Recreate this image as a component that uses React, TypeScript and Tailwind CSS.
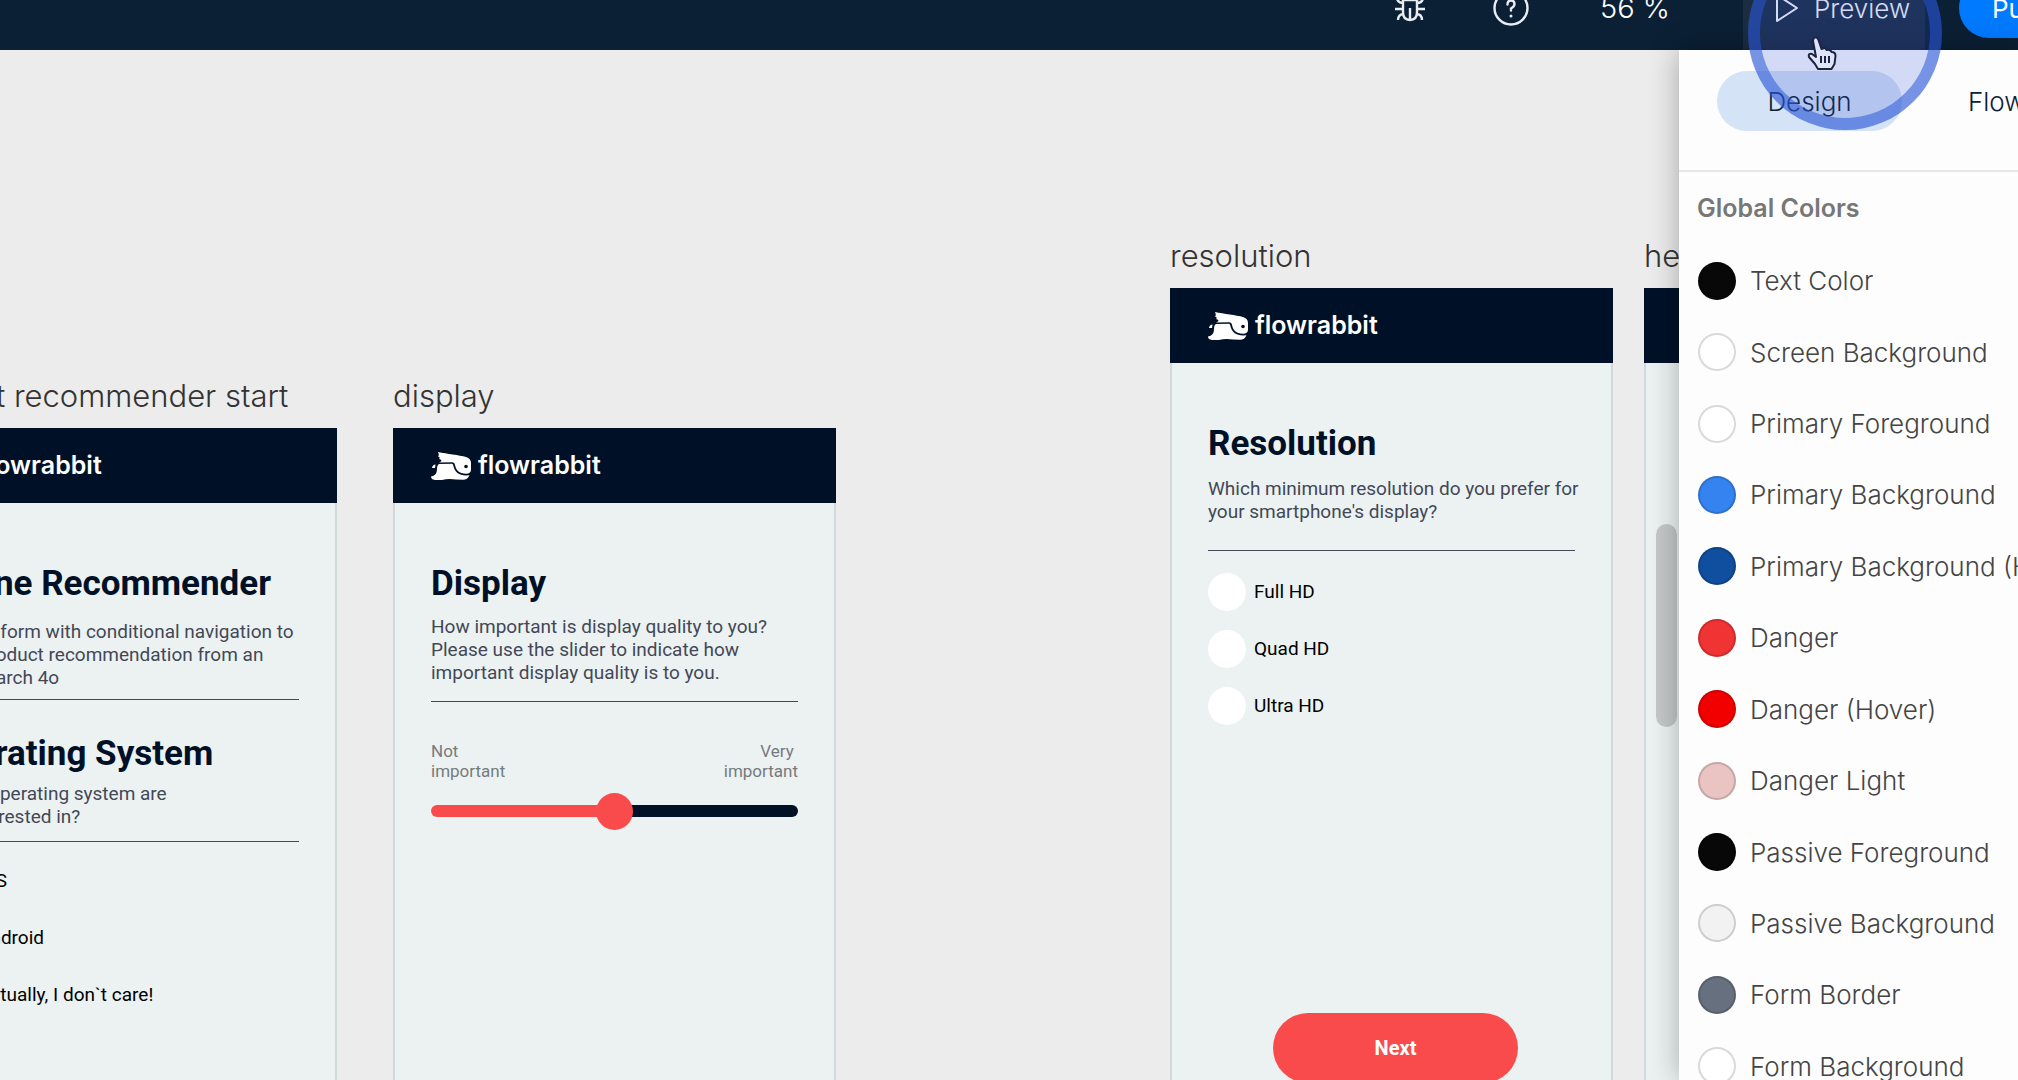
import type { ReactNode } from "react";

function Rabbit() {
  return (
    <svg viewBox="0 0 40 28" className="h-7 w-10 shrink-0" fill="#fff" aria-hidden="true">
      <path d="M7 0 C16 2 28 3 35 5 Q40 6.500 40 11 L40 18 Q39.500 22 35 21.800 C28 21.500 25 18 24 13 Q23.500 10.200 21 10.200 L8 10.500 Q12 8.800 9.500 7.500 L8 7 Q10 5.500 7 4.500 Q8.500 3 7 0Z" />
      <path d="M8 12 L21 11.800 Q22 11.800 22.300 13.500 C23.500 20 28 23.500 35 23.500 L38.500 23.300 Q36.500 27.800 32 27.800 L25 27.500 Q17 26.500 11 28 L4 28 Q0 27.500 0 24.500 Q6 24 6 17 Q6 13 8 12Z" />
      <path d="M1 16 Q1.500 12.500 4.500 12.500 L4 16Z" />
      <circle cx="35" cy="14.500" r="1.800" fill="#001127" />
    </svg>
  );
}

function Artboard({ name, place, children }: { name: string; place: string; children?: ReactNode }) {
  return (
    <section className={`absolute w-[443px] ${place}`}>
      <h2 className="mb-3 text-[31px] leading-10 font-light whitespace-nowrap text-[#333]">{name}</h2>
      <div className="h-[900px] border-x-2 border-[#d3d9da] bg-[#ecf2f2] font-[Roboto,sans-serif]">
        <div className="-mx-0.5 flex h-[75px] items-center gap-[7px] bg-[#001127] px-[38px] font-[Inter,sans-serif] text-[25px] font-semibold text-white">
          <Rabbit />
          flowrabbit
        </div>
        <div className="px-9 pt-[61px]">{children}</div>
      </div>
    </section>
  );
}

function Title({ children }: { children: ReactNode }) {
  return <h3 className="mb-2 text-[35px] leading-10 font-bold whitespace-nowrap text-[#001127]">{children}</h3>;
}

function Text({ children }: { children: ReactNode }) {
  return <p className="text-[19px] leading-[23px] whitespace-nowrap text-[#434857]">{children}</p>;
}

function Options({ group, items }: { group: string; items: string[] }) {
  return (
    <div className="flex flex-col gap-[19px]">
      {items.map((item) => (
        <label key={item} className="flex h-[38px] items-center gap-2 text-[19px] whitespace-nowrap text-black">
          <input type="radio" name={group} className="size-[38px] shrink-0 appearance-none rounded-full bg-white" />
          {item}
        </label>
      ))}
    </div>
  );
}

const colors = [
  ["Text Color", "bg-[#080808]"],
  ["Screen Background", "bg-white"],
  ["Primary Foreground", "bg-white"],
  ["Primary Background", "bg-[#3483f0]"],
  ["Primary Background (Hover)", "bg-[#104e9f]"],
  ["Danger", "bg-[#f03434]"],
  ["Danger (Hover)", "bg-[#f20000]"],
  ["Danger Light", "bg-[#eac3c3]"],
  ["Passive Foreground", "bg-[#080808]"],
  ["Passive Background", "bg-[#f2f2f2]"],
  ["Form Border", "bg-[#67707e]"],
  ["Form Background", "bg-white"],
];

function TopBar() {
  return (
    <header className="flex h-[50px] shrink-0 items-end justify-end overflow-hidden bg-[#0b2035] text-white">
      <div className="flex h-[84px] shrink-0 items-center font-light">
        <button aria-label="Debug" className="mr-[67px]">
          <svg viewBox="0 0 32 40" className="h-10 w-8" fill="none" stroke="#e8edf2" strokeWidth="2.400" aria-hidden="true">
            <path d="M9 12h14v12q0 8-7 8t-7-8zM16 20v12M9 21H1M23 21h8M9 15q-6 0-6-6M23 15q6 0 6-6M10 26q-6 0-6 6M22 26q6 0 6 6M11 12q0-7 5-7t5 7" />
          </svg>
        </button>
        <button aria-label="Help" className="mr-[71px]">
          <svg viewBox="0 0 36 36" className="size-9" fill="none" stroke="#e8edf2" strokeWidth="2.400" aria-hidden="true">
            <circle cx="18" cy="18" r="16.500" />
            <path d="M14.500 14.500q0-4 3.500-4t3.500 3.500q0 2.500-3.500 4.500v2" strokeLinecap="round" />
            <circle cx="18" cy="26" r="1.500" fill="#e8edf2" stroke="none" />
          </svg>
        </button>
        <span className="mr-[74px] w-[69px] text-[29px] whitespace-nowrap">56 %</span>
        <button className="flex h-full w-[182px] items-center gap-[15px] bg-[#1b2d40] pl-8 text-[26px]">
          <svg viewBox="0 0 24 30" className="h-[30px] w-6" fill="none" stroke="currentColor" strokeWidth="2" strokeLinejoin="round" aria-hidden="true">
            <path d="M2 2v26L22 15z" />
          </svg>
          Preview
        </button>
        <button className="ml-[34px] h-[60px] w-[59px] overflow-hidden rounded-l-full bg-[#007aff] pl-[33px] text-left text-[26px] font-normal">
          Publish
        </button>
      </div>
    </header>
  );
}

function Sidebar() {
  return (
    <aside className="z-10 w-[339px] shrink-0 overflow-hidden bg-[#fdfdfd] shadow-[0_0_28px_rgba(0,0,0,0.3)]">
      <div className="flex h-[122px] items-start gap-[66px] border-b-2 border-[#e4e6e7] px-[38px] pt-[21px] text-[26px] font-light text-[#0b2035]">
        <button className="h-[60px] w-[185px] shrink-0 rounded-full bg-[#d5e3f6]">Design</button>
        <button className="h-[60px] shrink-0">Flow</button>
      </div>
      <h2 className="px-[18px] pt-5 text-[25px] leading-8 font-semibold text-[#777]">Global Colors</h2>
      <ul className="mt-[21px] grid h-[857px] grid-rows-12">
        {colors.map(([name, fill]) => (
          <li key={name} className="flex items-center pl-[19px]">
            <button className="flex items-center gap-[14px] text-[26px] font-light whitespace-nowrap text-[#444]">
              <span className={`size-[38px] shrink-0 rounded-full border-2 border-black/15 ${fill}`} />
              {name}
            </button>
          </li>
        ))}
      </ul>
    </aside>
  );
}

export default function App() {
  return (
    <div className="relative flex h-screen flex-col overflow-hidden bg-[#ececec] font-[Inter,sans-serif]">
      <TopBar />
      <div className="flex min-h-0 flex-1">
        <main className="relative min-w-0 flex-1 overflow-hidden">
          <Artboard name="product recommender start" place="-left-[106px] top-[326px]">
            <Title>Phone Recommender</Title>
            <div className="pt-2">
              <Text>
                Sample form with conditional navigation to
                <br />
                get a product recommendation from an
                <br />
                AI Research 4o
              </Text>
            </div>
            <hr className="mt-[10px] mb-[34px] border-[#434857]" />
            <Title>Operating System</Title>
            <Text>
              Which operating system are
              <br />
              you interested in?
            </Text>
            <hr className="mt-[13px] mb-[20px] border-[#434857]" />
            <Options group="system" items={["iOS", "Android", "Actually, I don`t care!"]} />
          </Artboard>
          <Artboard name="display" place="left-[393px] top-[326px]">
            <Title>Display</Title>
            <div className="pt-[3px]">
              <Text>
                How important is display quality to you?
                <br />
                Please use the slider to indicate how
                <br />
                important display quality is to you.
              </Text>
            </div>
            <hr className="mt-[17px] mb-[39px] border-[#434857]" />
            <div className="flex justify-between text-[17px] leading-5 text-[#757b7d]">
              <span>
                Not
                <br />
                important
              </span>
              <span className="text-right">
                Very&nbsp;
                <br />
                important
              </span>
            </div>
            <input
              type="range"
              defaultValue={50}
              aria-label="Display quality importance"
              className="mt-6 block h-3 w-full appearance-none rounded-full bg-linear-to-r from-[#f94b4b] from-50% to-[#001127] to-50% [&::-webkit-slider-thumb]:size-[37px] [&::-webkit-slider-thumb]:appearance-none [&::-webkit-slider-thumb]:rounded-full [&::-webkit-slider-thumb]:bg-[#f94b4b]"
            />
          </Artboard>
          <Artboard name="resolution" place="left-[1170px] top-[186px]">
            <Title>Resolution</Title>
            <div className="pt-[5px]">
              <Text>
                Which minimum resolution do you prefer for
                <br />
                your smartphone's display?
              </Text>
            </div>
            <hr className="mt-[27px] mb-[22px] border-[#434857]" />
            <Options group="resolution" items={["Full HD", "Quad HD", "Ultra HD"]} />
            <button className="mt-[288px] ml-[65px] block h-[70px] w-[245px] rounded-full bg-[#f94b4b] text-[20px] font-bold text-white">
              Next
            </button>
          </Artboard>
          <Artboard name="headphones" place="left-[1644px] top-[186px]" />
          <div className="absolute top-[474px] right-0.5 h-[203px] w-[21px] rounded-full bg-[#c5c8c8]" />
        </main>
        <Sidebar />
      </div>
      <div className="pointer-events-none absolute -top-16 right-[76px] z-20 size-[194px] rounded-full border-12 border-[#2955d7]/63 bg-[#2d50d7]/20 bg-clip-padding" />
      <svg viewBox="0 0 32 34" className="pointer-events-none absolute top-9 right-[180px] z-30 h-[34px] w-8" fill="#dfe4f8" stroke="#1c2442" strokeWidth="2" strokeLinejoin="round" aria-hidden="true">
        <path d="M8 2q3-2 4.500 2l3 9q4-2 5 1 4-1 5 2 4 0 4 4l-1 8-3 5H12l-3-5-6-7q-1-4 3-3l4 3L7 5Q7 3 8 2Z" />
        <path d="M15 20v7M19 20v7M23 20v7" fill="none" />
      </svg>
    </div>
  );
}
